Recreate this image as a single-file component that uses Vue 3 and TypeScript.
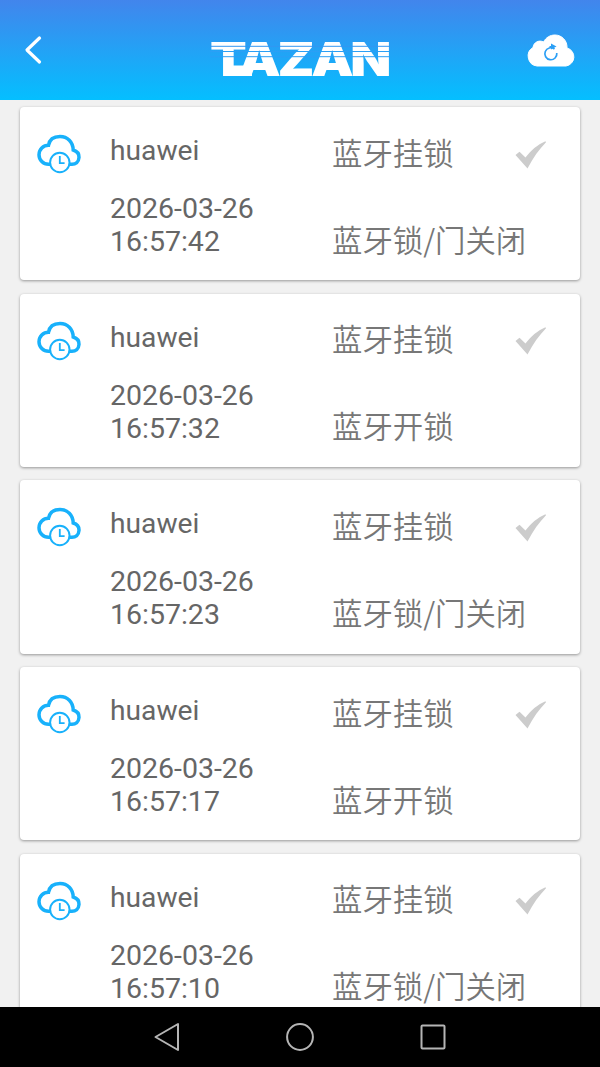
<script setup lang="ts">
interface LogEntry {
  user: string
  date: string
  time: string
  device: string
  action: string
}

const entries: LogEntry[] = [
  { user: 'huawei', date: '2026-03-26', time: '16:57:42', device: '蓝牙挂锁', action: '蓝牙锁/门关闭' },
  { user: 'huawei', date: '2026-03-26', time: '16:57:32', device: '蓝牙挂锁', action: '蓝牙开锁' },
  { user: 'huawei', date: '2026-03-26', time: '16:57:23', device: '蓝牙挂锁', action: '蓝牙锁/门关闭' },
  { user: 'huawei', date: '2026-03-26', time: '16:57:17', device: '蓝牙挂锁', action: '蓝牙开锁' },
  { user: 'huawei', date: '2026-03-26', time: '16:57:10', device: '蓝牙挂锁', action: '蓝牙锁/门关闭' },
]
</script>

<template>
  <div class="screen">
    <header class="topbar">
      <button class="icon-button back" aria-label="Back">
        <svg width="20" height="32" viewBox="0 0 20 32">
          <path d="M17.500 4 5 16l12.500 12" fill="none" stroke="#fff" stroke-width="3.200" stroke-linecap="round" stroke-linejoin="round" />
        </svg>
      </button>
      <svg class="logo" width="180" height="60" viewBox="0 0 180 60">
        <text class="wordmark" x="0" y="46" textLength="178" lengthAdjust="spacingAndGlyphs">TAZAN</text>
        <path d="M14 35.500h28v10.500H14Z" fill="#fff" />
        <path d="M0 16.300h180" stroke="#3396f2" stroke-width="1" />
        <path d="M0 21.500h180M0 26.700h180" stroke="#2b9ff5" stroke-width="1" />
      </svg>
      <button class="icon-button sync" aria-label="Sync">
        <svg width="50" height="34" viewBox="0 0 50 34">
          <path d="M12 33A10 10 0 0 1 8 14.500C8.500 9.500 14 6.500 18.500 9 21 4.500 25 2 30 2c7 0 12.500 6 12 13A9.200 9.200 0 0 1 41 33Z" fill="#fff" stroke="#fff" />
          <path d="M29.500 16A6 6 0 1 0 31.800 20M24.500 13.800h3" fill="none" stroke="#2b9ff5" stroke-width="1.700" />
          <path d="m26 10.400 5.500 3.200-5.500 3Z" fill="#2b9ff5" />
        </svg>
      </button>
    </header>

    <main class="list">
      <article v-for="entry in entries" :key="entry.time" class="card">
        <svg class="cloud" width="46" height="42" viewBox="0 0 46 42">
          <path d="M14 31.300h-2.500A9.500 9.500 0 0 1 11.500 12.300C12.500 6.500 17 3.500 23 3.500c7.500 0 13 5.500 13.200 13.500 4 1.200 6 4 5.800 7.500-.3 4.500-3.500 6.800-7 6.800h-3" fill="none" stroke="#18b1fb" stroke-width="3.500" />
          <circle cx="22.800" cy="29.500" r="9.700" fill="#fff" stroke="#18b1fb" stroke-width="2" />
          <path d="M22.800 23v7.200h4.800" fill="none" stroke="#18b1fb" stroke-width="1.800" />
        </svg>
        <div class="who">
          <div class="user">{{ entry.user }}</div>
          <div class="stamp">{{ entry.date }}<br>{{ entry.time }}</div>
        </div>
        <div class="what">
          <div class="device">{{ entry.device }}</div>
          <div class="action">{{ entry.action }}</div>
        </div>
        <svg class="check" width="32" height="28" viewBox="0 0 32 28">
          <path d="m.5 14 4-3.300 6 5.800C16 9.500 22 4 30.500.3l.5 1C24 8.500 18 17 12.500 27.500Z" fill="#ccc" />
        </svg>
      </article>
    </main>

    <nav class="navbar">
      <svg width="28" height="30" viewBox="0 0 28 30">
        <path d="M25 2v26L2.500 15Z" fill="none" stroke="#b5b5b5" stroke-width="2" stroke-linejoin="round" />
      </svg>
      <svg width="30" height="30" viewBox="0 0 30 30">
        <circle cx="15" cy="15" r="12.900" fill="none" stroke="#b5b5b5" stroke-width="2" />
      </svg>
      <svg width="28" height="30" viewBox="0 0 28 30">
        <rect x="2.500" y="3.500" width="23" height="23" rx="1" fill="none" stroke="#b5b5b5" stroke-width="2" />
      </svg>
    </nav>
  </div>
</template>

<style>
body {
  overflow: hidden;
}
</style>

<style scoped>
.screen {
  display: flex;
  flex-direction: column;
  width: 600px;
  height: 1067px;
  overflow: hidden;
  background: #f1f1f1;
  font-family: Roboto, "Noto Sans CJK SC", sans-serif;
}
.topbar {
  flex: none;
  box-sizing: border-box;
  height: 100px;
  padding: 0 25px 0 22px;
  display: flex;
  align-items: center;
  justify-content: space-between;
  background: linear-gradient(#4285ec, #04bfff);
}
.icon-button {
  display: flex;
  width: 50px;
  padding: 0;
  border: 0;
  background: none;
}
.logo {
  margin: 20px 0 0 2px;
  overflow: visible;
}
.wordmark {
  font: 900 47px Inter, Roboto, sans-serif;
  letter-spacing: -3px;
  fill: #fff;
}
.list {
  flex: 1;
  min-height: 0;
  overflow: hidden;
  padding: 7px 20px 0;
  display: flex;
  flex-direction: column;
  gap: 13.300px;
}
.card {
  flex: none;
  box-sizing: border-box;
  height: 173.400px;
  display: grid;
  grid-template-columns: 73px 222px 183px 1fr;
  padding-left: 17px;
  background: #fff;
  border-radius: 4px;
  box-shadow: 0 1px 3px rgba(0, 0, 0, 0.38);
}
.cloud {
  margin-top: 26px;
}
.who {
  padding-top: 27px;
  font-size: 28.500px;
  line-height: 33px;
  color: #666;
}
.user {
  font-size: 28.200px;
}
.stamp {
  margin-top: 25px;
}
.what {
  padding-top: 24.500px;
  font-family: "Noto Sans CJK SC", sans-serif;
  font-weight: 350;
  font-size: 30.400px;
  line-height: 40px;
  color: #777;
  white-space: nowrap;
}
.action {
  margin-top: 47px;
}
.check {
  margin-top: 33.500px;
}
.navbar {
  flex: none;
  height: 60px;
  display: flex;
  align-items: center;
  justify-content: space-between;
  box-sizing: border-box;
  padding: 0 153px;
  background: #000;
}
</style>
